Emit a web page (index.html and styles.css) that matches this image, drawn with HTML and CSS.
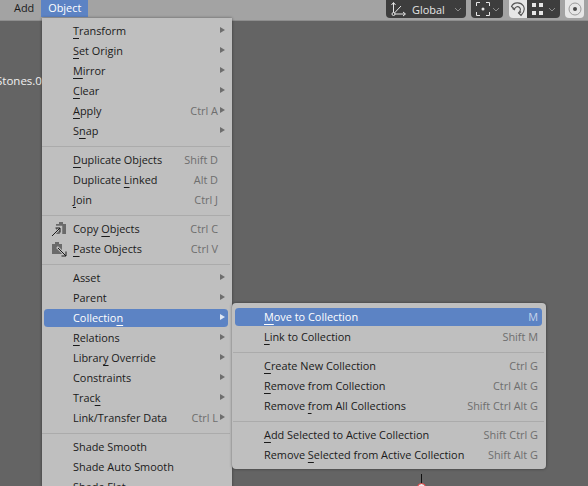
FILE: index.html

```html
<!DOCTYPE html>
<html>
  <head>
    <meta charset="utf-8">
    <title>Object menu</title>
    <link rel="stylesheet" href="styles.css">
  </head>
  <body>
    <div class="topbar">
      <div class="topbar-menus">
        <span class="topbar-item">Add</span>
        <span class="topbar-item topbar-active">Object</span>
      </div>
      <div class="tools">
        <div class="tool tool-global">
          <svg width="16" height="16" viewBox="0 0 16 16" fill="none" stroke="#e6e6e6" stroke-width="1">
            <path d="M3.500 13V2M1.500 4l2-2.500 2 2.500M3.500 13H15M13 11l2.500 2-2.500 2M3.500 13L11 5"/>
            <circle cx="3.500" cy="13" r="1.500" fill="#3d3d3d"/>
          </svg>
          <span class="tool-label">Global</span>
          <svg class="chev" width="8" height="5" viewBox="0 0 8 5"><path d="M1 1l3 3 3-3" fill="none" stroke="#8c8c8c"/></svg>
        </div>
        <div class="tool tool-pivot">
          <svg width="14" height="14" viewBox="0 0 14 14" fill="none" stroke="#e6e6e6">
            <path d="M.5 4V.5H4M10 .5h3.500V4M13.500 10v3.500H10M4 13.500H.5V10"/>
            <circle cx="7" cy="7" r="1.500" fill="#e6e6e6" stroke="none"/>
          </svg>
          <svg class="chev" width="8" height="5" viewBox="0 0 8 5"><path d="M1 1l3 3 3-3" fill="none" stroke="#8c8c8c"/></svg>
        </div>
        <div class="tool-pair">
          <div class="tool-light">
            <svg width="16" height="16" viewBox="0 0 16 16" fill="none" stroke="#555" stroke-width="1.100">
              <path d="M1.500 5.500C3.500 1 10.500 .5 13.500 5c1.500 3 .5 6.500-2.500 9.500L8.500 12C10.500 10 11 8 9.500 6.500 8 5 5.500 5.500 4.500 8z"/>
              <path d="M2.500 7.500l2.500 1.500M9 12.500l2-2"/>
            </svg>
          </div>
          <div class="tool tool-snap">
            <span class="snap-grid">
              <i></i><i></i><i></i><i></i>
            </span>
            <svg class="chev" width="8" height="5" viewBox="0 0 8 5"><path d="M1 1l3 3 3-3" fill="none" stroke="#8c8c8c"/></svg>
          </div>
        </div>
        <div class="tool-light tool-falloff">
          <svg width="14" height="14" viewBox="0 0 14 14" fill="none">
            <circle cx="7" cy="7" r="6" stroke="#9a9a9a"/>
            <circle cx="7" cy="7" r="2" fill="#4a4a4a"/>
          </svg>
        </div>
      </div>
    </div>

    <div class="viewport-label">Stones.01</div>
    <div class="cursor-line"></div>
    <div class="cursor-ring"></div>

    <div class="menu menu-object">
      <div class="row"><span class="row-name"><u>T</u>ransform</span><span class="arrow"></span></div>
      <div class="row"><span class="row-name"><u>S</u>et Origin</span><span class="arrow"></span></div>
      <div class="row"><span class="row-name"><u>M</u>irror</span><span class="arrow"></span></div>
      <div class="row"><span class="row-name"><u>C</u>lear</span><span class="arrow"></span></div>
      <div class="row"><span class="row-name"><u>A</u>pply</span><span class="key">Ctrl A</span><span class="arrow"></span></div>
      <div class="row"><span class="row-name">S<u>n</u>ap</span><span class="arrow"></span></div>
      <div class="sep"></div>
      <div class="row"><span class="row-name"><u>D</u>uplicate Objects</span><span class="key">Shift D</span></div>
      <div class="row"><span class="row-name">Duplicate <u>L</u>inked</span><span class="key">Alt D</span></div>
      <div class="row"><span class="row-name"><u>J</u>oin</span><span class="key">Ctrl J</span></div>
      <div class="sep"></div>
      <div class="row">
        <svg class="row-icon" width="16" height="16" viewBox="0 0 16 16" fill="none">
          <path d="M5 3h3V1h4v2h3v10H5z" fill="#6a6a6a"/>
          <path d="M0 16L9 7M3 6H10V13" stroke="#bfbfbf" stroke-width="2.500"/>
          <path d="M1 15L9 7M4.500 7H9v4.500" stroke="#1a1a1a"/>
        </svg>
        <span class="row-name">Copy <u>O</u>bjects</span><span class="key">Ctrl C</span>
      </div>
      <div class="row">
        <svg class="row-icon" width="16" height="16" viewBox="0 0 16 16" fill="none">
          <path d="M1 3h3V1h4v2h3v10H1z" fill="#6a6a6a"/>
          <path d="M6 6l9 9M16 9.500V16H9.500" stroke="#bfbfbf" stroke-width="2.500"/>
          <path d="M7 7l8 8M15 10.500V15h-4.500" stroke="#1a1a1a"/>
        </svg>
        <span class="row-name"><u>P</u>aste Objects</span><span class="key">Ctrl V</span>
      </div>
      <div class="sep"></div>
      <div class="row"><span class="row-name">Asset</span><span class="arrow"></span></div>
      <div class="row"><span class="row-name">Parent</span><span class="arrow"></span></div>
      <div class="row row-active"><span class="row-name">Collectio<u>n</u></span><span class="arrow"></span></div>
      <div class="row"><span class="row-name"><u>R</u>elations</span><span class="arrow"></span></div>
      <div class="row"><span class="row-name">Librar<u>y</u> Override</span><span class="arrow"></span></div>
      <div class="row"><span class="row-name">Constraints</span><span class="arrow"></span></div>
      <div class="row"><span class="row-name">Trac<u>k</u></span><span class="arrow"></span></div>
      <div class="row"><span class="row-name">Link/Transfer Data</span><span class="key">Ctrl L</span><span class="arrow"></span></div>
      <div class="sep"></div>
      <div class="row"><span class="row-name">Shade Smooth</span></div>
      <div class="row"><span class="row-name">Shade Auto Smooth</span></div>
      <div class="row"><span class="row-name">Shade Flat</span></div>
    </div>

    <div class="menu menu-collection">
      <div class="row row-active"><span class="row-name"><u>M</u>ove to Collection</span><span class="key">M</span></div>
      <div class="row"><span class="row-name"><u>L</u>ink to Collection</span><span class="key">Shift M</span></div>
      <div class="sep"></div>
      <div class="row"><span class="row-name"><u>C</u>reate New Collection</span><span class="key">Ctrl G</span></div>
      <div class="row"><span class="row-name"><u>R</u>emove from Collection</span><span class="key">Ctrl Alt G</span></div>
      <div class="row"><span class="row-name">Remove <u>f</u>rom All Collections</span><span class="key">Shift Ctrl Alt G</span></div>
      <div class="sep"></div>
      <div class="row"><span class="row-name"><u>A</u>dd Selected to Active Collection</span><span class="key">Shift Ctrl G</span></div>
      <div class="row"><span class="row-name">Remove <u>S</u>elected from Active Collection</span><span class="key">Shift Alt G</span></div>
    </div>
  </body>
</html>
```

FILE: styles.css

```css
html, body {
  height: 100%;
}

body {
  margin: 0;
  overflow: hidden;
  background: #646464;
  color: #1a1a1a;
  font-family: "Open Sans", "Noto Sans", sans-serif;
  font-size: 10.9px;
}

/* Header bar with menus on the left and tool buttons on the right */
.topbar {
  display: flex;
  justify-content: space-between;
  height: 21px;
  background: #a3a3a3;
  box-sizing: border-box;
  border-bottom: 1px solid #8e8e8e;
}

.topbar-menus {
  display: flex;
  padding-left: 7px;
}

.topbar-item {
  padding: 0 7px;
  height: 17px;
  line-height: 16px;
}

.topbar-active {
  background: #5c83c4;
  color: #fff;
}

.tools {
  display: flex;
  gap: 5px;
  padding-right: 4px;
}

.tool {
  display: flex;
  align-items: center;
  height: 18px;
  background: #3d3d3d;
  color: #e6e6e6;
  border-radius: 0 0 4px 4px;
  box-sizing: border-box;
}

.tool-global {
  width: 80px;
  padding: 0 4px;
}

.tool-label {
  margin-left: 6px;
  flex: 1;
}

.tool-pivot {
  width: 32px;
  padding-left: 5px;
  gap: 2px;
}

.tool-pair {
  display: flex;
  margin-left: 1px;
}

.tool-light {
  display: flex;
  align-items: center;
  justify-content: center;
  width: 18px;
  height: 18px;
  background: #e6e6e6;
  border-radius: 0 0 0 4px;
}

.tool-snap {
  width: 33px;
  padding-left: 5px;
  gap: 5px;
  border-radius: 0 0 4px 0;
}

.tool-falloff {
  width: 19px;
  border-radius: 0 0 4px 4px;
}

.snap-grid {
  display: grid;
  grid-template-columns: 4px 4px;
  gap: 4px 3px;
}

.snap-grid i {
  width: 4px;
  height: 4px;
  background: #e6e6e6;
}

/* Things drawn in the 3D viewport, behind the menus */
.viewport-label {
  position: absolute;
  left: -4px;
  top: 73px;
  color: #f0f0f0;
  font-size: 11.5px;
}

.cursor-line {
  position: absolute;
  left: 421px;
  top: 474px;
  width: 1px;
  height: 10px;
  background: #111;
}

.cursor-ring {
  position: absolute;
  left: 417px;
  top: 483px;
  width: 9px;
  height: 9px;
  border-radius: 50%;
  background: #e8e8e8;
  border: 1px solid #d33;
  box-sizing: border-box;
}

/* Popup menus */
.menu {
  position: absolute;
  box-sizing: border-box;
  background: #bfbfbf;
  box-shadow: 0 0 3px rgba(0, 0, 0, .45);
}

.menu-object {
  left: 42px;
  top: 18px;
  width: 190px;
  padding: 3px 4px 3px 2px;
  border-radius: 0 0 4px 4px;
}

.menu-collection {
  left: 232px;
  top: 303px;
  width: 314px;
  padding: 4px 4px 4px 3px;
  border-radius: 4px;
}

.row {
  position: relative;
  display: flex;
  align-items: center;
  box-sizing: border-box;
  height: 20px;
  padding-left: 29px;
  padding-right: 4px;
  padding-bottom: 2px;
  border-top: 1px solid transparent;
  border-bottom: 1px solid transparent;
  white-space: nowrap;
}

/* Keys line up whether or not the row has a submenu arrow */
.menu-object .row {
  padding-right: 10px;
}

.row-active {
  background: #5c83c4;
  background-clip: padding-box;
  color: #fff;
  border-radius: 4px;
}

.row-name {
  flex: 1;
}

.row u {
  text-decoration-thickness: 1px;
  text-underline-offset: 3px;
}

.row-icon {
  position: absolute;
  left: 7px;
  top: 1px;
}

.key {
  color: #6e6e6e;
}

.row-active .key {
  color: #c5d3ea;
}

.arrow {
  width: 0;
  height: 0;
  margin-left: 2px;
  margin-right: -7px;
  border-left: 5px solid #6e6e6e;
  border-top: 3px solid transparent;
  border-bottom: 3px solid transparent;
}

.row-active .arrow {
  border-left-color: #dfe7f4;
}

.sep {
  height: 1px;
  margin: 5px -2px 3px;
  background: #ababab;
}
```
